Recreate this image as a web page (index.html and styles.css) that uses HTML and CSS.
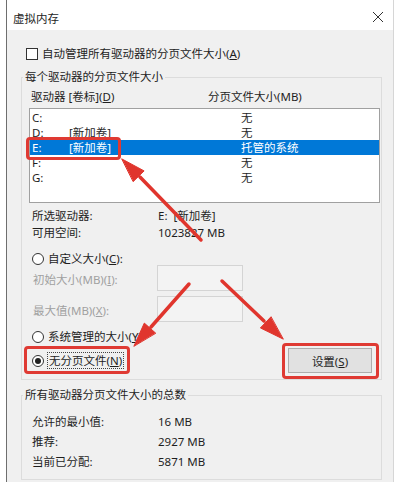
FILE: index.html
```html
<!DOCTYPE html>
<html lang="zh-CN">
<head>
    <meta charset="UTF-8">
    <meta name="viewport" content="width=device-width, initial-scale=1.0">
    <title>虚拟内存</title>
    <link rel="stylesheet" href="styles.css">
</head>
<body>

    <div class="window">
        <div class="titlebar">
            <span class="title">虚拟内存</span>
            <svg class="close" width="12" height="12" viewBox="0 0 12 12">
                <path d="M1 1 L11 11 M11 1 L1 11" stroke="#333" stroke-width="1" fill="none"/>
            </svg>
        </div>

        <div class="dialog">
            <div class="check-row">
                <span class="checkbox"></span>
                <span>自动管理所有驱动器的分页文件大小(<u>A</u>)</span>
            </div>

            <fieldset class="group group-drives">
                <legend>每个驱动器的分页文件大小</legend>

                <div class="list-head">
                    <span>驱动器 [卷标](<u>D</u>)</span>
                    <span>分页文件大小(MB)</span>
                </div>

                <div class="listbox">
                    <div class="list-row"><span>C:</span><span></span><span>无</span></div>
                    <div class="list-row"><span>D:</span><span>[新加卷]</span><span>无</span></div>
                    <div class="list-row selected"><span>E:</span><span>[新加卷]</span><span>托管的系统</span></div>
                    <div class="list-row"><span>F:</span><span></span><span>无</span></div>
                    <div class="list-row"><span>G:</span><span></span><span>无</span></div>
                </div>

                <div class="info-row first"><span class="info-key">所选驱动器:</span><span class="keep-space">E:  [新加卷]</span></div>
                <div class="info-row"><span class="info-key">可用空间:</span><span>1023827 MB</span></div>

                <div class="radio-row custom">
                    <span class="radio"></span>
                    <span>自定义大小(<u>C</u>):</span>
                </div>

                <div class="size-row">
                    <span class="disabled-text">初始大小(MB)(<u>I</u>):</span>
                    <span class="size-input"></span>
                </div>
                <div class="size-row second">
                    <span class="disabled-text">最大值(MB)(<u>X</u>):</span>
                    <span class="size-input"></span>
                </div>

                <div class="radio-row system">
                    <span class="radio"></span>
                    <span>系统管理的大小(<u>Y</u>)</span>
                </div>

                <div class="action-row">
                    <div class="radio-row nofile">
                        <span class="radio checked"></span>
                        <span class="focus-text">无分页文件(<u>N</u>)</span>
                    </div>
                    <button class="set-btn">设置(<u>S</u>)</button>
                </div>
            </fieldset>

            <fieldset class="group group-total">
                <legend>所有驱动器分页文件大小的总数</legend>
                <div class="total-row"><span class="info-key">允许的最小值:</span><span>16 MB</span></div>
                <div class="total-row"><span class="info-key">推荐:</span><span>2927 MB</span></div>
                <div class="total-row"><span class="info-key">当前已分配:</span><span>5871 MB</span></div>
            </fieldset>
        </div>
    </div>

    <!-- red annotation marks drawn over the dialog -->
    <div class="mark mark-drive"></div>
    <div class="mark mark-nofile"></div>
    <div class="mark mark-set"></div>

    <svg class="arrows" width="394" height="482" viewBox="0 0 394 482">
        <g stroke="#e0352d" stroke-width="3.5" stroke-linecap="round" fill="#e0352d">
            <line x1="201" y1="240" x2="140" y2="177"/>
            <polygon points="122,159 144.1,170.9 133.4,181.4" stroke-width="1"/>

            <line x1="189" y1="284" x2="151" y2="327"/>
            <polygon points="134,346 144.3,323.1 155.5,333.0" stroke-width="1"/>

            <line x1="222" y1="281" x2="264" y2="321"/>
            <polygon points="283,339 260.4,327.9 270.8,317.0" stroke-width="1"/>
        </g>
    </svg>

</body>
</html>
```

FILE: styles.css
```css
body {
    margin: 0;
    background: #fff;
    font-family: "Noto Sans", "Noto Sans CJK SC", sans-serif;
    font-size: 11.5px;
    color: #1e1e1e;
}
u {
    text-decoration: underline;
    text-underline-offset: 1px;
}
.window {
    margin-left: 6px;
    width: 386px;
    height: 482px;
    border-left: 1px solid #6e6e6e;
    border-right: 1px solid #d6d6d6;
    background: #f0f0f0;
}
.titlebar {
    height: 30px;
    background: #fff;
    display: flex;
    align-items: center;
    justify-content: space-between;
    padding: 0 9px 0 6px;
}
.title {
    font-size: 11.5px;
    padding-top: 5px;
}
.close {
    margin-top: 4px;
}
.dialog {
    padding-top: 16px;
}
.check-row {
    display: flex;
    align-items: center;
    gap: 4px;
    height: 16px;
    margin-left: 19px;
    line-height: 16px;
}
.checkbox {
    width: 10px;
    height: 10px;
    border: 1px solid #333;
    background: #fff;
}
.group {
    margin: 7px 0 0 14px;
    padding: 0;
    width: 361px;
    box-sizing: border-box;
    border: 1px solid #dcdcdc;
    min-inline-size: 0;
}
.group legend {
    padding: 0 2px;
    margin-left: 1px;
    line-height: 16px;
}
.list-head {
    display: grid;
    grid-template-columns: 177px 1fr;
    padding-left: 9px;
    margin-top: 4px;
    line-height: 16px;
}
.listbox {
    margin: 3px 1px 0 7px;
    height: 95px;
    box-sizing: border-box;
    border: 1px solid #a0a0a0;
    background: #fff;
    padding-top: 1px;
}
.list-row {
    display: grid;
    grid-template-columns: 37px 172px 1fr;
    padding-left: 2px;
    height: 15px;
    line-height: 15px;
}
.list-row.selected {
    background: #0078d7;
    color: #fff;
}
.info-row {
    display: grid;
    grid-template-columns: 126px 1fr;
    padding-left: 10px;
    line-height: 17px;
}
.info-row.first {
    margin-top: 4px;
}
.keep-space {
    white-space: pre;
}
.radio-row {
    display: flex;
    align-items: center;
    gap: 4px;
    padding-left: 10px;
}
.radio-row.custom {
    margin-top: 12px;
    height: 12px;
    line-height: 12px;
}
.radio-row.system {
    margin-top: 7px;
    height: 16px;
    line-height: 16px;
}
.radio {
    width: 10px;
    height: 10px;
    border: 1px solid #333;
    border-radius: 50%;
    background: #fff;
    display: flex;
    align-items: center;
    justify-content: center;
}
.radio.checked::after {
    content: "";
    width: 6px;
    height: 6px;
    border-radius: 50%;
    background: #222;
}
.size-row {
    display: grid;
    grid-template-columns: 124px 86px;
    align-items: center;
    padding-left: 11px;
}
.size-row.second {
    margin-top: 5px;
}
.disabled-text {
    color: #a0a0a0;
    padding-top: 2px;
}
.size-input {
    height: 26px;
    box-sizing: border-box;
    border: 1px solid #d4d4d4;
    background: #f3f3f3;
}
.action-row {
    display: flex;
    align-items: center;
    justify-content: space-between;
    height: 27px;
    margin-top: 2px;
    padding-right: 9px;
    margin-bottom: 5px;
}
.radio-row.nofile {
    padding-left: 10px;
}
.focus-text {
    outline: 1px dotted #444;
    padding: 0 1px;
    line-height: 15px;
}
.set-btn {
    width: 84px;
    height: 25px;
    border: 1px solid #adadad;
    background: #e1e1e1;
    font-family: inherit;
    font-size: 11.5px;
    color: #1e1e1e;
    padding: 0;
}
.group-total legend {
    line-height: 16px;
}
.total-row {
    display: grid;
    grid-template-columns: 126px 1fr;
    padding-left: 10px;
    line-height: 20px;
}
.total-row:first-of-type {
    margin-top: 9px;
}
.group-total {
    padding-bottom: 7px;
}
.mark {
    position: absolute;
    border: 3px solid #df3a33;
    border-radius: 4px;
    box-sizing: border-box;
}
.mark-drive {
    left: 26px;
    top: 137px;
    width: 95px;
    height: 23px;
}
.mark-nofile {
    left: 24px;
    top: 346px;
    width: 106px;
    height: 28px;
}
.mark-set {
    left: 282px;
    top: 343px;
    width: 97px;
    height: 36px;
}
.arrows {
    position: absolute;
    left: 0;
    top: 0;
    pointer-events: none;
}
```
